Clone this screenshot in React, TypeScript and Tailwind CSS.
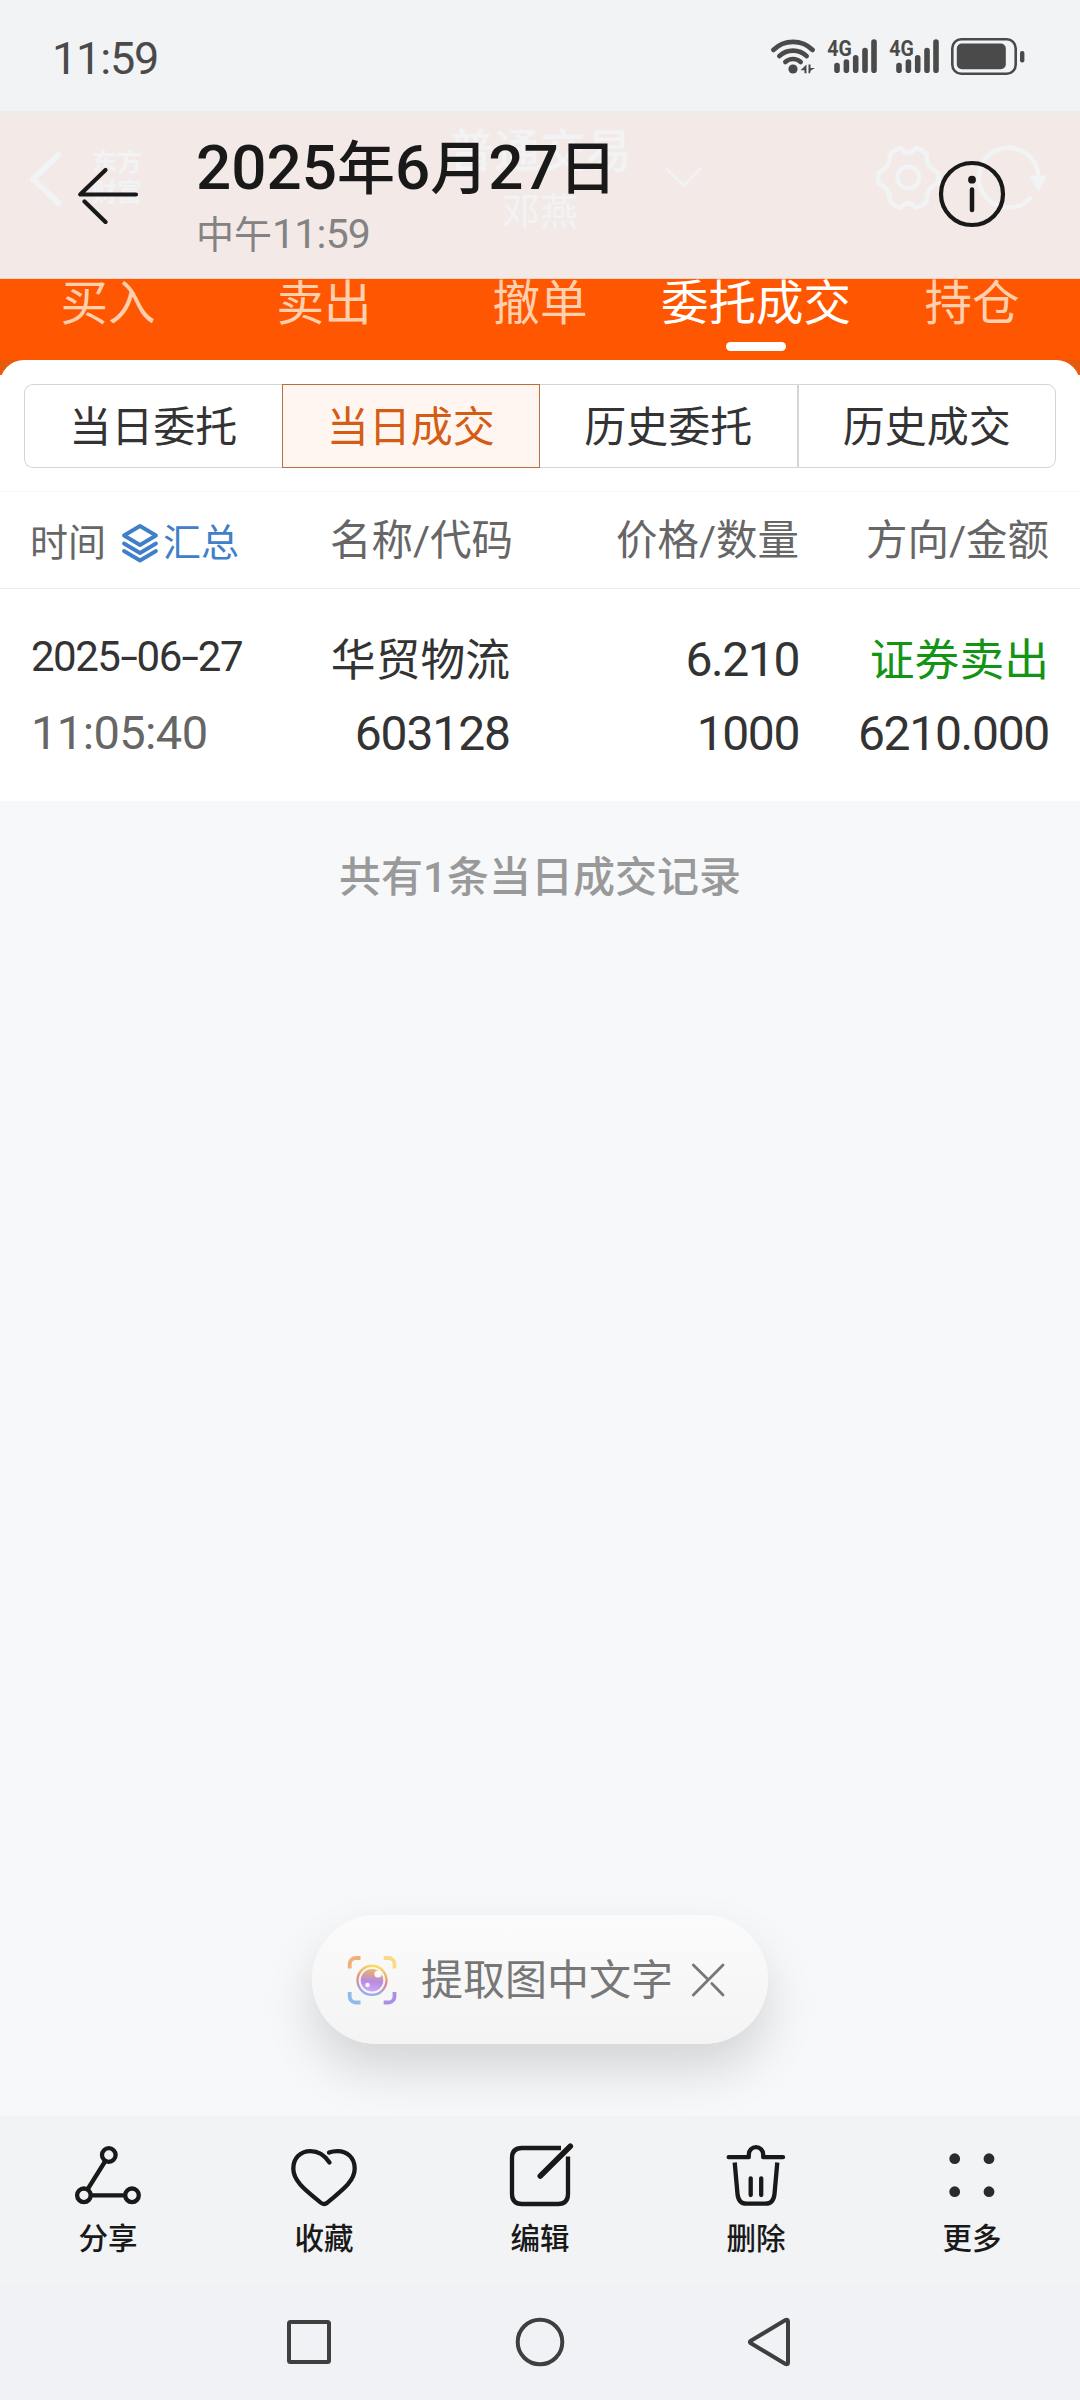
import React from 'react';

const TABS = ['买入', '卖出', '撤单', '委托成交', '持仓'];
const SEGMENTS = ['当日委托', '当日成交', '历史委托', '历史成交'];

/* ── status bar ── */
const Signal = () => (
  <svg className="w-[52px] h-[40px]" viewBox="0 0 52 40" fill="none" stroke="#4a4a4a" strokeWidth="5.6" strokeLinecap="round">
    <text x="1.2" y="21" fontSize="22.5" fontWeight="700" fontFamily="Roboto, sans-serif" fill="#4a4a4a" stroke="none" textLength="24.5" lengthAdjust="spacingAndGlyphs">4G</text>
    <path d="M11 30.5v4.7M20.4 27.1v8.1M29.7 22.8v12.4M39 15.5v19.7M48 7.1v28.1" />
  </svg>
);

const StatusBar = () => (
  <div className="h-[111px] bg-[#f1f3f5] flex items-start justify-between pl-[52px] pr-[55px] pt-[35px]">
    <span className="text-[45px] leading-[48px] tracking-[-1.2px] text-[#4a4a4a]">11:59</span>
    <div className="flex items-start">
      <svg className="w-[46px] h-[40px] mr-[10px]" viewBox="0 0 46 40" fill="none" stroke="#4a4a4a" strokeWidth="4.6" strokeLinecap="round">
        <path d="M3.3 15a28 28 0 0 1 39.4 0" />
        <path d="M9.3 21.2a19.5 19.5 0 0 1 27.4 0" />
        <path d="M15.3 27a11.5 11.5 0 0 1 15.4 0" />
        <circle cx="23" cy="34" r="4.6" fill="#4a4a4a" stroke="none" />
        <path d="M30.5 35.3l6-5.8v8.8h-2v-3zM45 33l-4.2 2.5-.8 2.8h-1.5v-8.8h2v3.500z" fill="#4a4a4a" stroke="none" />
      </svg>
      <div className="flex gap-[10px] mr-[10px]">
        <Signal />
        <Signal />
      </div>
      <svg className="w-[75px] h-[42px]" viewBox="0 0 75 42" fill="#4a4a4a">
        <rect x="2.3" y="4.3" width="63.4" height="34.4" rx="9" fill="none" stroke="#4a4a4a" strokeWidth="2.6" />
        <rect x="6.8" y="8.5" width="49" height="25.8" rx="5" />
        <rect x="70" y="16" width="4.4" height="11.5" rx="2" />
      </svg>
    </div>
  </div>
);

/* the trading app's own header, washed out behind the gallery bar */
const FadedHeader = () => (
  <div className="absolute inset-0 overflow-hidden text-[#f1f3f5]">
    <svg className="absolute inset-0 w-full h-full" viewBox="0 0 1080 168" fill="none" stroke="#f1f3f5" strokeLinecap="round" strokeLinejoin="round">
      <path d="M55.5 44L30 68.5l25.5 24" strokeWidth="6" />
      <path d="M667.5 58l17 17 17-17" strokeWidth="2.6" />
      <circle cx="910.5" cy="67" r="11" strokeWidth="4.2" />
      <path
        strokeWidth="4.5"
        d="M903 37.5q7.5 9 15 0q6 1 11 6q-1 13 11 18q2 6 0 11.5q-12 5-11 18q-5 5-11 6q-7.5-9-15 0q-6-1-11-6q1-13-11-18q-2-6 0-11.5q12-5 11-18q5-5 11-6z"
      />
      <path d="M1041.5 67a30 30 0 1 0-8.5 21" strokeWidth="4.5" />
      <path d="M1031.5 65h18.5l-8.5 16z" fill="#f1f3f5" stroke="none" />
    </svg>
    <div className="absolute left-[92px] top-[37px] text-[25px] leading-[30px] font-bold">
      <p>东方</p>
      <p>财富</p>
    </div>
    <p className="absolute inset-x-0 top-[10px] text-center text-[46px] leading-[60px] font-medium">普通交易</p>
    <p className="absolute inset-x-0 top-[77px] text-center text-[38px] leading-[48px]">邓燕</p>
  </div>
);

const GalleryHeader = () => (
  <header className="relative h-[168px] bg-[#f3eae8] bg-gradient-to-b from-[#f0ebe7] to-[#f3eae8] to-[10px] border-b border-[#f6d5c6]">
    <FadedHeader />
    <div className="relative h-full flex items-start pl-[76px] pr-[73px]">
      <svg className="w-[64px] h-[60px] mt-[53px]" viewBox="0 0 64 60" fill="none" stroke="#191919" strokeWidth="4.2" strokeLinecap="round" strokeLinejoin="round">
        <path d="M29.5 6L4.2 30.5H60" />
        <path d="M8.5 37.5l21 20.5" />
      </svg>
      <div className="ml-[56px] flex-1">
        <h1 className="mt-[19px] text-[58px] leading-[76px] text-[#191919] font-medium whitespace-nowrap">
          <span className="text-[62px]">2025</span>年
          <span className="text-[62px]">6</span>月
          <span className="text-[62px]">27</span>日
        </h1>
        <p className="mt-[1px] text-[38px] leading-[52px] text-[#848282] whitespace-nowrap">
          中午<span className="text-[41px] tracking-[-0.8px]">11:59</span>
        </p>
      </div>
      <svg className="w-[70px] h-[70px] mt-[48px]" viewBox="0 0 70 70" fill="none" stroke="#191919" strokeWidth="4.2">
        <circle cx="35" cy="35" r="31" />
        <circle cx="35" cy="20.7" r="3.9" fill="#191919" stroke="none" />
        <path d="M35 30.5v20.5" strokeLinecap="round" strokeWidth="4.5" />
      </svg>
    </div>
  </header>
);

/* ── trading page ── */
const TopTabs = () => (
  <nav className="h-[81px] bg-[#ff5701] grid grid-cols-5">
    {TABS.map((tab) => {
      const active = tab === '委托成交';
      return (
        <div key={tab} className="flex flex-col items-center">
          <span className={`text-[47.5px] leading-[50px] whitespace-nowrap ${active ? 'text-white' : 'text-[#ffcfae]'}`}>{tab}</span>
          {active && <span className="mt-[13px] w-[60px] h-[9px] rounded-full bg-white" />}
        </div>
      );
    })}
  </nav>
);

const Segments = () => (
  <div className="h-[84px] flex">
    {SEGMENTS.map((seg, i) => (
      <div
        key={seg}
        className={`flex-1 flex items-center justify-center pt-[2px] text-[42px] border ${
          seg === '当日成交' ? 'border-[#b9703f] bg-[#fff6f2] text-[#d45c14]' : 'border-[#d3d6d6] text-[#333]'
        } ${i === 0 ? 'rounded-l-[9px] border-r-0' : ''} ${i === 2 ? 'border-l-0' : ''} ${i === 3 ? 'rounded-r-[9px]' : ''}`}
      >
        {seg}
      </div>
    ))}
  </div>
);

const TableHead = () => (
  <div className="h-[98px] border-y border-t-[#f8f8f8] border-b-[#ececec] flex items-center pt-[2px] pl-[30px] text-[41.5px] text-[#666] whitespace-nowrap">
    <div className="w-[251px] flex items-center pt-[4px] text-[38px]">
      时间
      <svg className="w-[40px] h-[42px] ml-[14px] mr-[3px]" viewBox="0 0 40 42" fill="none" stroke="#3f80c9" strokeWidth="3.8" strokeLinecap="round" strokeLinejoin="round">
        <path d="M20 4L36 13.5 20 23 4 13.5z" />
        <path d="M4 21.5l16 9.5 16-9.5" />
        <path d="M4 29l16 9.5L36 29" />
      </svg>
      <span className="text-[#3f80c9]">汇总</span>
    </div>
    <div className="w-[232px] text-right">名称/代码</div>
    <div className="w-[286px] text-right">价格/数量</div>
    <div className="w-[250px] text-right">方向/金额</div>
  </div>
);

// the dash in the date is drawn wider than Roboto's hyphen
const Dash = () => <span className="inline-block scale-x-150 mx-[3.5px]">-</span>;

const TradeRow = () => (
  <div className="h-[212px] flex pl-[31px] pt-[33px] text-[#333] whitespace-nowrap">
    <div className="w-[250px]">
      <p className="text-[42px] leading-[70px] tracking-[-1.5px]">
        2025<Dash />06<Dash />27
      </p>
      <p className="pt-[1px] text-[47px] leading-[80px] tracking-[-0.6px] text-[#666]">11:05:40</p>
    </div>
    <div className="w-[229px] pt-[1px] text-right">
      <p className="text-[44.8px] leading-[76px]">华贸物流</p>
      <p className="text-[48px] leading-[70px] tracking-[-1.1px]">603128</p>
    </div>
    <div className="w-[289px] pt-[1px] text-right text-[48px] tracking-[-1.4px]">
      <p className="leading-[74px]">6.210</p>
      <p className="leading-[74px]">1000</p>
    </div>
    <div className="w-[250px] pt-[1px] text-right">
      <p className="text-[44.8px] leading-[76px] text-[#149414]">证券卖出</p>
      <p className="text-[48px] leading-[70px] tracking-[-1.3px]">6210.000</p>
    </div>
  </div>
);

const ExtractPill = () => (
  <div className="w-[456px] h-[129px] rounded-full bg-gradient-to-b from-[#fafbfa] to-[#f4f4f4] shadow-[0_26px_50px_rgba(0,0,0,0.14)] flex items-center pl-[34px] text-[42px] text-[#777] whitespace-nowrap">
    <svg className="w-[52px] h-[52px]" viewBox="0 0 52 52" fill="none">
      <defs>
        <linearGradient id="ring" x1="0.6" y1="0" x2="0.4" y2="1">
          <stop offset="0" stopColor="#fbdc62" />
          <stop offset="0.5" stopColor="#e58a86" />
          <stop offset="1" stopColor="#8fb0f0" />
        </linearGradient>
        <linearGradient id="lens" x1="0.6" y1="0" x2="0.5" y2="1">
          <stop offset="0" stopColor="#f3b65f" />
          <stop offset="0.55" stopColor="#b78be0" />
          <stop offset="1" stopColor="#cfa3f7" />
        </linearGradient>
      </defs>
      <path d="M3.7 14.5V10a6 6 0 0 1 6-6h4.8" stroke="#f2b078" strokeWidth="3.8" />
      <path d="M37.7 4h4.8a6 6 0 0 1 6 6v4.5" stroke="#f6dc85" strokeWidth="3.8" />
      <path d="M3.7 38v4.5a6 6 0 0 0 6 6h4.8" stroke="#90bcea" strokeWidth="3.8" />
      <path d="M37.7 48.5h4.8a6 6 0 0 0 6-6V38" stroke="#a98fe6" strokeWidth="3.8" />
      <circle cx="26" cy="26.3" r="14.5" stroke="url(#ring)" strokeWidth="2.4" />
      <circle cx="26" cy="26.3" r="11.3" fill="url(#lens)" />
      <circle cx="32" cy="20" r="3.6" fill="#fafafa" />
      <circle cx="21.5" cy="31" r="2.2" fill="#fafafa" />
    </svg>
    <span className="ml-[23px] pt-[2px]">提取图中文字</span>
    <svg className="w-[36px] h-[36px] ml-[17px]" viewBox="0 0 36 36" fill="none" stroke="#777" strokeWidth="2.8" strokeLinecap="round">
      <path d="M3.3 3l14.7 14.5M21.8 21.5L33 33M33 3L3.3 33" />
    </svg>
  </div>
);

/* ── bottom actions ── */
const ACTIONS = [
  {
    label: '分享',
    icon: (
      <>
        <circle cx="36.8" cy="15" r="6.8" />
        <circle cx="11.9" cy="55.3" r="6.8" />
        <circle cx="60" cy="55.3" r="6.8" />
        <path d="M33 21.5L15.8 49M19 55.3h34" />
      </>
    ),
  },
  {
    label: '收藏',
    icon: <path d="M41.5 22.5C36.5 15 30 11.1 22.5 11.1 12 11.1 5.3 18.5 5.3 28.5c0 14.500 17 25 27.2 34q3.5 3 7 0C49.5 53.5 66.7 43 66.7 28.5 66.7 17 58.5 11.1 49.5 11.1q-5 0-8.5 1.5" />,
  },
  {
    label: '编辑',
    icon: (
      <>
        <path strokeLinecap="butt" d="M57 8H18q-10 0-10 10v36q0 10 10 10h36q10 0 10-10V16.5" />
        <path strokeWidth="5.6" d="M36.3 36L66.3 6.2" />
      </>
    ),
  },
  {
    label: '删除',
    icon: (
      <>
        <path d="M8.7 17.2H28.8V14.4a7.2 7.2 0 0 1 14.4 0v2.8H63" />
        <path strokeLinecap="butt" d="M14.7 22.5l2.8 31.5q1 9.7 9 9.7h19q8 0 9-9.7l2.8-31.5" />
        <path d="M30.7 38.3v16.7M41.2 38.3v16.7" />
      </>
    ),
  },
  {
    label: '更多',
    icon: (
      <g fill="#2b2b2b" stroke="none">
        <circle cx="18.7" cy="18.7" r="5.4" />
        <circle cx="53" cy="18.7" r="5.4" />
        <circle cx="18.7" cy="51.7" r="5.4" />
        <circle cx="53" cy="51.7" r="5.4" />
      </g>
    ),
  },
];

const ActionBar = () => (
  <div className="h-[169px] bg-[#f2f3f5] grid grid-cols-5 pt-[24px]">
    {ACTIONS.map((a) => (
      <div key={a.label} className="flex flex-col items-center">
        <svg className="w-[72px] h-[72px]" viewBox="0 0 72 72" fill="none" stroke="#191919" strokeWidth="4.3" strokeLinecap="round" strokeLinejoin="round">
          {a.icon}
        </svg>
        <span className="mt-[7px] text-[29.5px] leading-[40px] font-medium text-[#191919]">{a.label}</span>
      </div>
    ))}
  </div>
);

const NavBar = () => (
  <div className="h-[115px] bg-[#f1f2f6] flex items-start justify-center gap-[179px] pt-[31px]">
    <svg className="w-[52px] h-[52px]" viewBox="0 0 52 52" fill="none" stroke="#3f3f3f" strokeWidth="4">
      <rect x="6" y="6" width="40" height="40" rx="1.5" />
    </svg>
    <svg className="w-[52px] h-[52px]" viewBox="0 0 52 52" fill="none" stroke="#3f3f3f" strokeWidth="4">
      <circle cx="26" cy="26" r="22.3" />
    </svg>
    <svg className="w-[52px] h-[52px]" viewBox="0 0 52 52" fill="none" stroke="#3f3f3f" strokeWidth="4" strokeLinejoin="round">
      <path d="M5.5 25q-1 1 0 2l35 21q2.5 1 2.5-1.5v-41q0-2.5-2.5-1.5z" />
    </svg>
  </div>
);

const App = () => {
  return (
    <div className="w-[1080px] h-[2400px] flex flex-col overflow-hidden bg-[#f7f8fa] font-[Roboto,'Noto_Sans_CJK_SC',sans-serif]">
      <StatusBar />
      <GalleryHeader />
      <TopTabs />
      <div className="bg-[linear-gradient(#e65a0e_0_15px,#fff_15px)]">
        <section className="bg-white rounded-t-[24px]">
          <div className="px-[24px] pt-[24px] pb-[23px]">
            <Segments />
          </div>
          <TableHead />
          <TradeRow />
        </section>
      </div>
      <main className="flex-1 flex flex-col items-center justify-between pt-[47px] pb-[72px]">
        <p className="text-[42px] leading-[60px] font-medium text-[#999]">共有1条当日成交记录</p>
        <ExtractPill />
      </main>
      <ActionBar />
      <NavBar />
    </div>
  );
};

export default App;
